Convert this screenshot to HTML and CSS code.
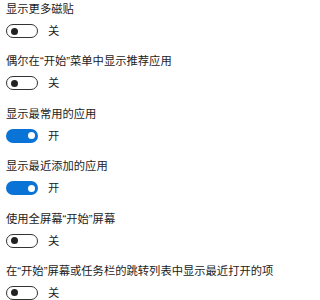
FILE: index.html
```html
<!DOCTYPE html>
<html lang="zh-CN">
<head>
<meta charset="utf-8">
<link rel="stylesheet" href="styles.css">
</head>
<body>
<div class="list">
  <div class="item">
    <div class="label">显示更多磁贴</div>
    <div class="row"><span class="toggle off"><span class="knob"></span></span><span class="state">关</span></div>
  </div>
  <div class="item">
    <div class="label">偶尔在“开始”菜单中显示推荐应用</div>
    <div class="row"><span class="toggle off"><span class="knob"></span></span><span class="state">关</span></div>
  </div>
  <div class="item">
    <div class="label">显示最常用的应用</div>
    <div class="row"><span class="toggle on"><span class="knob"></span></span><span class="state">开</span></div>
  </div>
  <div class="item">
    <div class="label">显示最近添加的应用</div>
    <div class="row"><span class="toggle on"><span class="knob"></span></span><span class="state">开</span></div>
  </div>
  <div class="item">
    <div class="label">使用全屏幕“开始”屏幕</div>
    <div class="row"><span class="toggle off"><span class="knob"></span></span><span class="state">关</span></div>
  </div>
  <div class="item">
    <div class="label">在“开始”屏幕或任务栏的跳转列表中显示最近打开的项</div>
    <div class="row"><span class="toggle off"><span class="knob"></span></span><span class="state">关</span></div>
  </div>
</div>
</body>
</html>
```
FILE: styles.css
```css
html, body {
  margin: 0;
  padding: 0;
  background: #ffffff;
}
body {
  font-family: "Liberation Sans", "Noto Sans CJK SC", sans-serif;
  font-size: 11.3px;
  color: #1b1b1b;
  overflow: hidden;
}
.list {
  display: flex;
  flex-direction: column;
  gap: 16.4px;
  padding: 2px 0 0 6px;
}
.item {
  display: flex;
  flex-direction: column;
  gap: 8px;
}
.label {
  line-height: 14px;
  height: 14px;
  white-space: nowrap;
}
.row {
  display: flex;
  align-items: center;
  height: 14px;
  gap: 10px;
}
.toggle {
  box-sizing: border-box;
  width: 32px;
  height: 14px;
  border-radius: 7px;
  display: flex;
  align-items: center;
  padding: 0 3px;
}
.toggle.off {
  border: 1.5px solid #333333;
  background: #ffffff;
  justify-content: flex-start;
}
.toggle.on {
  background: #0a74d6;
  justify-content: flex-end;
}
.knob {
  width: 7px;
  height: 7px;
  border-radius: 50%;
}
.toggle.off .knob {
  background: #222222;
  margin-left: 0.5px;
}
.toggle.on .knob {
  background: #ffffff;
  margin-right: 0.5px;
}
.state {
  line-height: 14px;
}
```
